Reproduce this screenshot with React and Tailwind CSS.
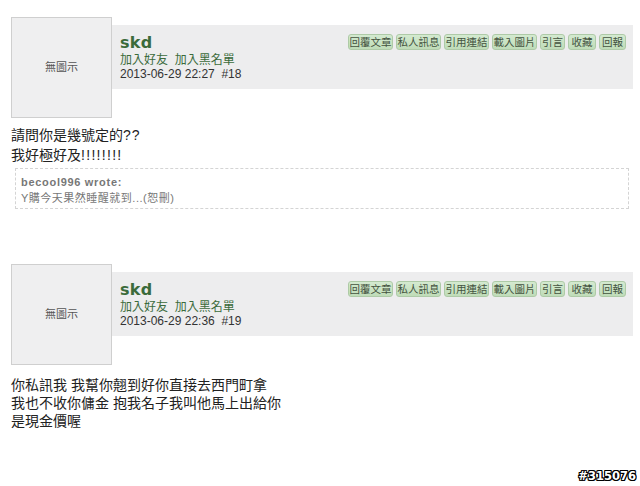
import React from "react";

const btns = [
  ["回覆文章", "w-[45px]"],
  ["私人訊息", "w-[45px]"],
  ["引用連結", "w-[45px]"],
  ["載入圖片", "w-[45px]"],
  ["引言", "w-[25px]"],
  ["收藏", "w-[28px]"],
  ["回報", "w-[27px]"],
];

function Header({ date }) {
  return (
    <div className="flex items-start">
      <div className="w-[101px] h-[101px] shrink-0 border border-[#cfcfcf] bg-[#efeff0] flex items-center justify-center text-[11px] text-[#555]">
        無圖示
      </div>
      <div className="mt-[8px] mr-[7px] h-[64px] flex-1 bg-[#ededee] flex justify-between">
        <div className="pl-[8px] pt-[9px]">
          <div className="text-[16px] leading-[18px] font-bold text-[#3b6b3b] font-['DejaVu_Sans',sans-serif] tracking-[0.3px]">skd</div>
          <div className="mt-[1px] text-[12px] leading-[14px] text-[#3b6b3b]">加入好友&nbsp;&nbsp;加入黑名單</div>
          <div className="text-[12px] leading-[14px] text-[#333] whitespace-pre">2013-06-29 {date}</div>
        </div>
        <div className="flex gap-[3px] pt-[9px] pr-[7px] h-fit">
          {btns.map(([t, w]) => (
            <div
              key={t}
              className={`${w} h-[16px] flex items-center justify-center rounded-[3px] border border-[#aecaa7] bg-gradient-to-b from-[#d4ead0] to-[#bfdcb8] text-[10.5px] leading-none text-[#44533f]`}
            >
              {t}
            </div>
          ))}
        </div>
      </div>
    </div>
  );
}

export default function App() {
  return (
    <div className="w-[640px] h-[486px] bg-white relative overflow-hidden font-['Liberation_Sans','Noto_Sans_CJK_TC',sans-serif] text-[#222]">
      <div className="pl-[11px] pt-[17px]">
        <Header date="22:27  #18" />
        <div className="mt-[7px] text-[14px] leading-[20px] text-[#222]">
          <div>請問你是幾號定的<span className="tracking-[1px]">??</span></div>
          <div>我好極好及<span className="tracking-[1.3px]">!!!!!!!!</span></div>
        </div>
        <div className="mt-[3px] ml-[4px] mr-[11px] h-[41px] border border-dashed border-[#d4d4d4] pl-[5px] pt-[6px]">
          <div className="text-[11px] leading-[14px] font-bold text-[#777] tracking-[0.7px]">becool996 wrote:</div>
          <div className="mt-[2px] text-[11px] leading-[14px] text-[#777] tracking-[0.5px]">Y購今天果然睡醒就到...(恕刪)</div>
        </div>
        <div className="mt-[55px]">
          <Header date="22:36  #19" />
        </div>
        <div className="mt-[11px] text-[14px] leading-[18px] text-[#222]">
          <div>你私訊我 我幫你翹到好你直接去西門町拿</div>
          <div>我也不收你傭金 抱我名子我叫他馬上出給你</div>
          <div>是現金價喔</div>
        </div>
      </div>
      <div className="absolute right-[4px] bottom-[3px] text-[11.5px] leading-[14px] font-bold text-white font-['DejaVu_Sans',sans-serif] [text-shadow:1px_0_0_#000,-1px_0_0_#000,0_1px_0_#000,0_-1px_0_#000,1px_1px_0_#000,-1px_-1px_0_#000,1px_-1px_0_#000,-1px_1px_0_#000]">
        #315076
      </div>
    </div>
  );
}
